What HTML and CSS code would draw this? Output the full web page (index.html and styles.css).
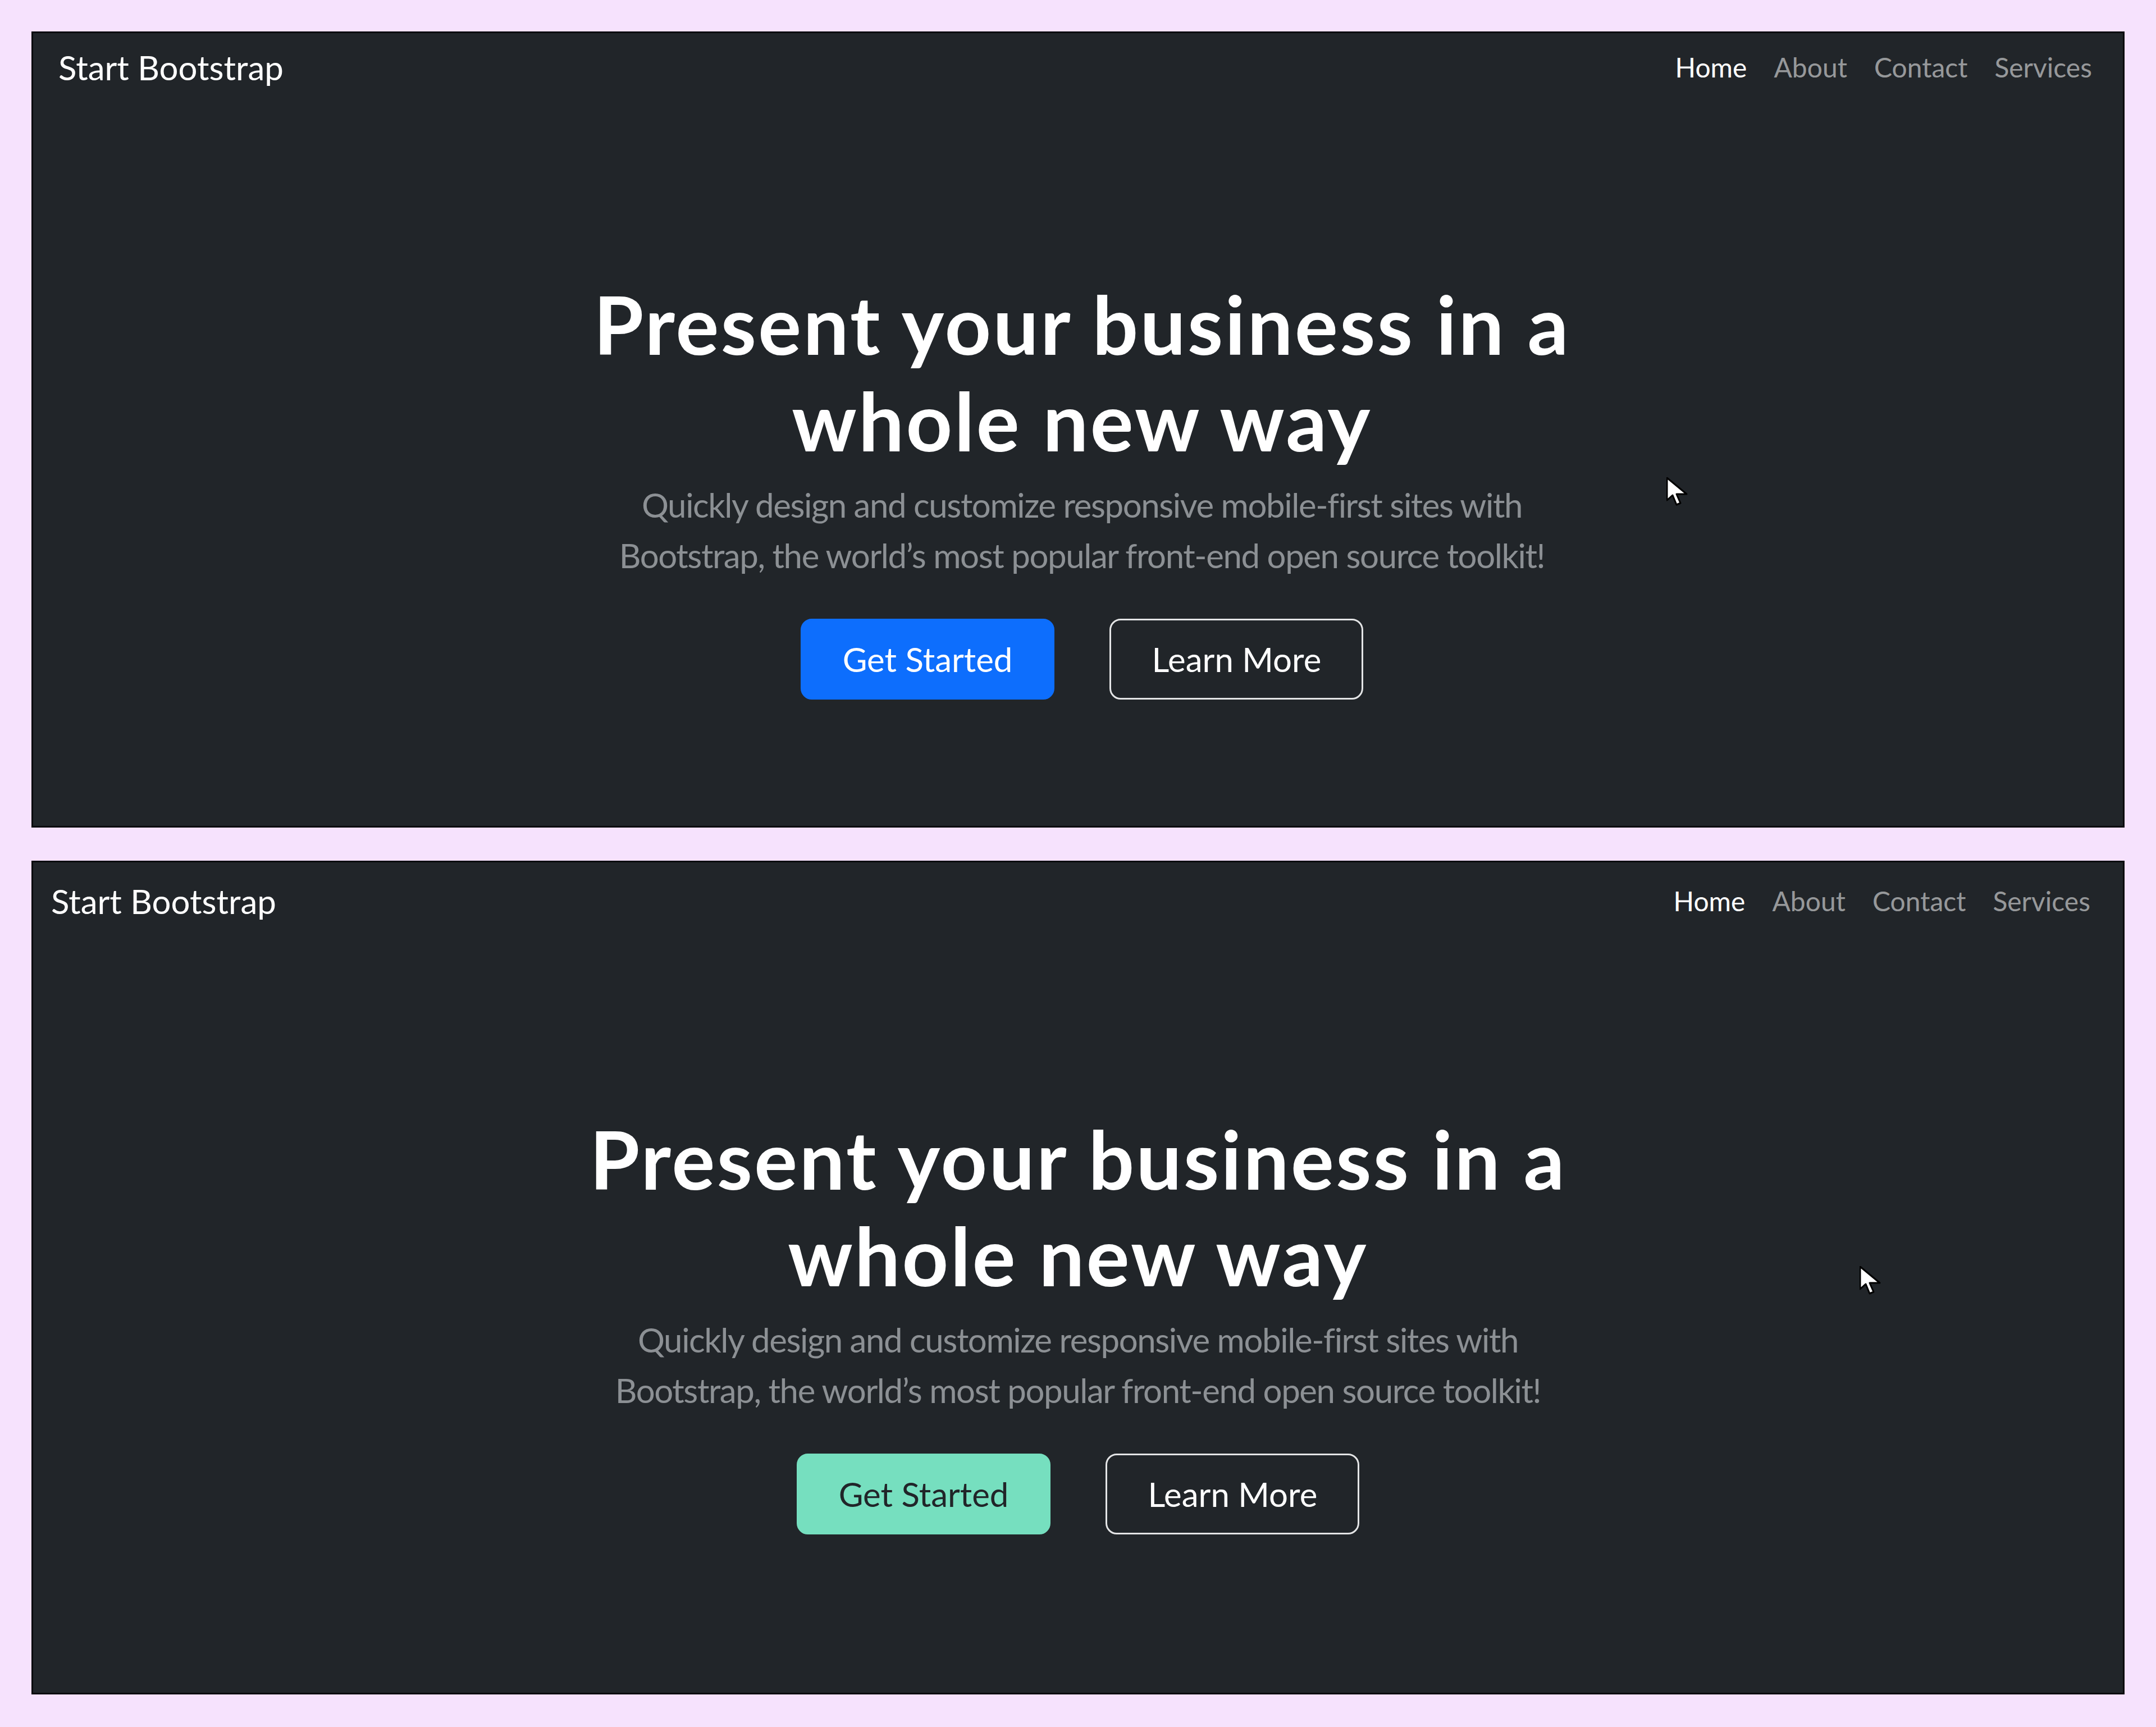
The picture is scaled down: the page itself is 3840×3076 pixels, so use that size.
FILE: index.html
```html
<!DOCTYPE html>
<html>
	<head>
		<title>Start Bootstrap</title>
		<link rel="stylesheet" href="styles.css">
	</head>
	<body>
		<div class="shots">
			<section class="shot shot-one">
				<nav class="navbar">
					<a class="brand" href="#">Start Bootstrap</a>
					<ul class="nav-links">
						<li><a class="active" href="#">Home</a></li>
						<li><a href="#">About</a></li>
						<li><a href="#">Contact</a></li>
						<li><a href="#">Services</a></li>
					</ul>
				</nav>
				<div class="hero">
					<h1>Present your business in a<br>whole new way</h1>
					<p class="lead">Quickly design and customize responsive mobile-first sites with<br>Bootstrap, the world’s most popular front-end open source toolkit!</p>
					<div class="actions">
						<a class="btn btn-primary" href="#">Get Started</a>
						<a class="btn btn-outline" href="#">Learn More</a>
					</div>
				</div>
				<svg class="cursor" width="38" height="52" viewBox="0 0 38 52">
					<path d="M1 1 L1 41 L11 32 L18 49 L25 46 L18 30 L36 30 Z" fill="#fff" stroke="#000" stroke-width="3" stroke-linejoin="round"/>
				</svg>
			</section>

			<section class="shot shot-two">
				<nav class="navbar">
					<a class="brand" href="#">Start Bootstrap</a>
					<ul class="nav-links">
						<li><a class="active" href="#">Home</a></li>
						<li><a href="#">About</a></li>
						<li><a href="#">Contact</a></li>
						<li><a href="#">Services</a></li>
					</ul>
				</nav>
				<div class="hero">
					<h1>Present your business in a<br>whole new way</h1>
					<p class="lead">Quickly design and customize responsive mobile-first sites with<br>Bootstrap, the world’s most popular front-end open source toolkit!</p>
					<div class="actions">
						<a class="btn btn-mint" href="#">Get Started</a>
						<a class="btn btn-outline" href="#">Learn More</a>
					</div>
				</div>
				<svg class="cursor" width="38" height="52" viewBox="0 0 38 52">
					<path d="M1 1 L1 41 L11 32 L18 49 L25 46 L18 30 L36 30 Z" fill="#fff" stroke="#000" stroke-width="3" stroke-linejoin="round"/>
				</svg>
			</section>
		</div>
	</body>
</html>
```

FILE: styles.css
```css
* {
	box-sizing: border-box;
}

body {
	margin: 0;
	background-color: #f6e2fd;
	font-family: Lato, "Noto Sans", sans-serif;
}

.shots {
	display: flex;
	flex-direction: column;
	gap: 59px;
	padding: 56px;
}

.shot {
	position: relative;
	background-color: #212529;
	border: 3px solid #0b0c0e;
	color: #fff;
}

.shot-one {
	height: 1418px;
}

.shot-two {
	height: 1485px;
}

/* navbar */
.navbar {
	display: flex;
	align-items: center;
	justify-content: space-between;
}

.shot-one .navbar {
	padding: 16px 31px 16px 45px;
}

.shot-two .navbar {
	padding: 24px 34px 24px 32px;
}

.brand {
	font-size: 60px;
	line-height: 90px;
	color: #fff;
	text-decoration: none;
}

.nav-links {
	display: flex;
	list-style: none;
	margin: 0;
	padding: 0;
}

.nav-links a {
	display: block;
	padding: 0 24px;
	font-size: 48px;
	line-height: 72px;
	color: rgba(255, 255, 255, 0.55);
	text-decoration: none;
}

.nav-links a.active {
	color: #fff;
}

/* hero */
.hero {
	text-align: center;
}

.shot-one .hero {
	padding: 310px 0 0 14px;
}

.shot-two .hero {
	padding: 304px 0 0 0;
}

.hero h1 {
	margin: 0 0 19px;
	font-size: 144px;
	line-height: 172px;
	font-weight: 700;
	letter-spacing: 0.023em;
}

.lead {
	margin: 0 0 68px;
	font-size: 60px;
	line-height: 90px;
	letter-spacing: -0.024em;
	color: #8c9094;
}

.actions {
	display: flex;
	justify-content: center;
	gap: 98px;
}

.btn {
	display: inline-block;
	padding: 24px 72px;
	border: 3px solid transparent;
	border-radius: 20px;
	font-size: 60px;
	line-height: 90px;
	text-decoration: none;
}

.btn-primary {
	background-color: #0d6efd;
	border-color: #0d6efd;
	color: #fff;
}

.btn-mint {
	background-color: #76dfbf;
	border-color: #76dfbf;
	color: #212529;
}

.btn-outline {
	border-color: #e4e5e6;
	color: #fff;
}

.cursor {
	position: absolute;
}

.shot-one .cursor {
	left: 2909px;
	top: 791px;
}

.shot-two .cursor {
	left: 3253px;
	top: 719px;
}
```
